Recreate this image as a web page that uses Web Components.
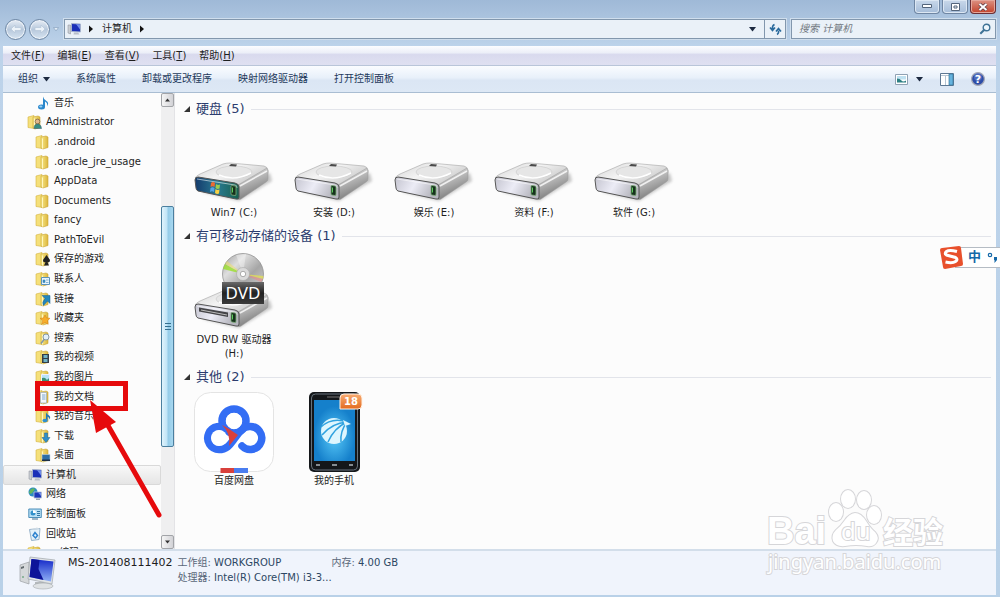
<!DOCTYPE html>
<html lang="zh-CN">
<head>
<meta charset="utf-8">
<title>计算机</title>
<style>
    html, body {
        height: 100%;
        margin: 0;
    }
    body {
        color: #1e1e1e;
        font: 10px/14px "DejaVu Sans", "Noto Sans CJK SC", sans-serif;
        overflow: hidden;
    }
</style>
</head>
<body>
<explorer-window>
    <explorer-titlebar slot="title" location="计算机"></explorer-titlebar>
    <explorer-menu slot="menu">
        <button>文件(<u>F</u>)</button>
        <button>编辑(<u>E</u>)</button>
        <button>查看(<u>V</u>)</button>
        <button>工具(<u>T</u>)</button>
        <button>帮助(<u>H</u>)</button>
    </explorer-menu>
    <explorer-toolbar slot="toolbar">
        <button>组织 <ui-icon name="caret"></ui-icon></button>
        <button>系统属性</button>
        <button>卸载或更改程序</button>
        <button>映射网络驱动器</button>
        <button>打开控制面板</button>
        <button slot="end" aria-label="视图"><ui-icon name="view"></ui-icon><ui-icon name="caret"></ui-icon></button>
        <button slot="end" aria-label="预览窗格"><ui-icon name="pane"></ui-icon></button>
        <button slot="end" aria-label="帮助"><ui-icon name="help"></ui-icon></button>
    </explorer-toolbar>

    <folder-tree slot="tree">
        <tree-item icon="music" nested>音乐</tree-item>
        <tree-item icon="user">Administrator</tree-item>
        <tree-item icon="folder" nested>.android</tree-item>
        <tree-item icon="folder" nested>.oracle_jre_usage</tree-item>
        <tree-item icon="folder" nested>AppData</tree-item>
        <tree-item icon="folder" nested>Documents</tree-item>
        <tree-item icon="folder" nested>fancy</tree-item>
        <tree-item icon="folder" nested>PathToEvil</tree-item>
        <tree-item icon="games" nested>保存的游戏</tree-item>
        <tree-item icon="contacts" nested>联系人</tree-item>
        <tree-item icon="links" nested>链接</tree-item>
        <tree-item icon="favorites" nested>收藏夹</tree-item>
        <tree-item icon="searches" nested>搜索</tree-item>
        <tree-item icon="videos" nested>我的视频</tree-item>
        <tree-item icon="pictures" nested>我的图片</tree-item>
        <tree-item icon="documents" nested>我的文档</tree-item>
        <tree-item icon="mymusic" nested>我的音乐</tree-item>
        <tree-item icon="downloads" nested>下载</tree-item>
        <tree-item icon="desktop" nested>桌面</tree-item>
        <tree-item icon="computer" selected>计算机</tree-item>
        <tree-item icon="network">网络</tree-item>
        <tree-item icon="control">控制面板</tree-item>
        <tree-item icon="recycle">回收站</tree-item>
        <tree-item icon="folder">一 编码</tree-item>
    </folder-tree>

    <item-group heading="硬盘 (5)">
        <item-tile icon="system-drive">Win7 (C:)</item-tile>
        <item-tile icon="drive">安装 (D:)</item-tile>
        <item-tile icon="drive">娱乐 (E:)</item-tile>
        <item-tile icon="drive">资料 (F:)</item-tile>
        <item-tile icon="drive">软件 (G:)</item-tile>
    </item-group>
    <item-group heading="有可移动存储的设备 (1)">
        <item-tile icon="dvd">DVD RW 驱动器 (H:)</item-tile>
    </item-group>
    <item-group heading="其他 (2)">
        <item-tile icon="netdisk">百度网盘</item-tile>
        <item-tile icon="phone">我的手机</item-tile>
    </item-group>

    <details-pane slot="details" name="MS-201408111402">
        <span>工作组: <b>WORKGROUP</b></span>
        <span>内存: <b>4.00 GB</b></span>
        <span>处理器: <b>Intel(R) Core(TM) i3-3...</b></span>
    </details-pane>
</explorer-window>
<click-marker></click-marker>
<ime-bar></ime-bar>
<site-watermark></site-watermark>

<script>
const folder = `
    <path d="M0 2l6-1.500v13l-6-1z" fill="#f5e07a" stroke="#d3b240" stroke-width=".6"/>
    <path d="M5 2l5-1 2 1v10.500l-5 1.500-2-1z" fill="url(#f)" stroke="#c9a434" stroke-width=".6"/>
    <path d="M6.500 3.500v10" stroke="#fff7c0" stroke-width="1"/>
    <defs><linearGradient id="f"><stop stop-color="#f8e88a"/><stop offset="1" stop-color="#dcb63c"/></linearGradient></defs>`;

const screen = `
    <path d="M1 3h2.500v9l-2.500-1z" fill="#c9cdd2" stroke="#888f99" stroke-width=".5"/>
    <path d="M4.500 1.500l9 .5v8l-9-.5z" fill="#1a2fb8" stroke="#a8b4cc" stroke-width=".9"/>
    <path d="M9 2l4 .5v5z" fill="#6f8bea"/>
    <path d="M7 10.500h4l1.500 2h-6z" fill="#b8bec9"/>`;

const driveBody = `
    <defs>
        <linearGradient id="top" x2="1" y2=".6"><stop stop-color="#d2d2d2"/><stop offset=".5" stop-color="#f4f4f4"/><stop offset="1" stop-color="#c9c9c9"/></linearGradient>
        <linearGradient id="side" x2=".4" y2="1"><stop stop-color="#f5f5f5"/><stop offset=".5" stop-color="#b4b4b4"/><stop offset="1" stop-color="#777"/></linearGradient>
        <linearGradient id="face" x2="1" y2=".3"><stop stop-color="#c4c4cf"/><stop offset=".5" stop-color="#ececf6"/><stop offset="1" stop-color="#b5b5bd"/></linearGradient>
        <linearGradient id="sys" x2="1"><stop stop-color="#143a6c"/><stop offset=".5" stop-color="#2a7a92"/><stop offset="1" stop-color="#17604c"/></linearGradient>
        <filter id="soft" x="-20%" y="-30%" width="140%" height="160%"><feGaussianBlur stdDeviation="1.500"/></filter>
    </defs>
    <path d="M8 68l37 9 33-20-2-8-30 10z" fill="#999" opacity=".55" filter="url(#soft)"/>
    <path d="M1 54Q2 52 6 50L29 40Q32 39 36 39L70 42Q74 43 73 46L46 61Z" fill="url(#top)" stroke="#a5a5a5" stroke-width=".6"/>
    <path d="M44 61L73 44Q75 46 74 50V55Q74 57 72 58L47 75Q45 76 44 75Z" fill="url(#side)" stroke="#9a9a9a" stroke-width=".5"/>
    <path d="M46 62L73 47" stroke="#fff" stroke-width="1.500" opacity=".8"/>
    <ellipse cx="40" cy="48" rx="18" ry="6" fill="#e6e6e6" stroke="#cdcdcd" stroke-width=".7"/>
    <path d="M25 51q15 7 32-2" fill="none" stroke="#fff" stroke-width="1.500"/>
    <path d="M37 40l6 .5-1 2-7-.5z" fill="#4a4a4a"/>`;

const driveFace = fill => `
    <path d="M1 56Q1 53 4 53L41 59Q45 60 45 63V73Q45 76 42 75L4 67Q2 66 2 64Z" fill="${fill}" stroke="#555" stroke-width="1"/>
    <path d="M3 55l38 6q2 0 2 3" fill="none" stroke="#fff" stroke-width=".8" opacity=".7"/>
    <path d="M37 62.500q0-1 1-1l3 .5q1 0 1 1v7q0 2-1 1.500l-3-.5q-1 0-1-1z" fill="#16321c" stroke="#7fae7b" stroke-width=".8"/>
    <path d="M38.500 63.500v5" stroke="#5bcb5b" stroke-width="1"/>`;

// name: [width, height, viewBox, markup]
const icons = {
    caret: [7, 5, '0 0 7 5', '<path d="M0 0h7l-3.500 4.500z" fill="#1d2a40"/>'],
    arrow: [5, 8, '0 0 5 8', '<path d="M0 .5l4 3.500-4 3.500z" fill="#111"/>'],
    refresh: [13, 13, '0 0 13 13', '<path d="M5.500 1.500Q3 2.500 3.500 6M1 4.500l2.500 3 2.500-3M8 11.500q2-1 1.500-4M7 8.500l2.500-3 2.500 3" fill="none" stroke="#2a6a9c" stroke-width="1.600"/>'],
    search: [12, 12, '0 0 12 12', '<circle cx="7.500" cy="4.500" r="3.300" fill="#eef7fd" stroke="#3f7396" stroke-width="1.400"/><path d="M5 7L1.300 10.700" stroke="#3f7396" stroke-width="2"/>'],
    view: [13, 11, '0 0 13 11', '<path d="M.5.500h12v10h-12z" fill="#fff" stroke="#8fa1b3"/><path d="M2 2h9v3.500h-9z" fill="#bfe1f1"/><path d="M2 8.500v-4q3 0 4.500 2t4.500 0v2z" fill="#2c7f83"/>'],
    pane: [14, 13, '0 0 14 13', '<path d="M.5.500h13v12h-13z" fill="#fff" stroke="#5d7792"/><path d="M1 2.500h8M5.500 3v9" stroke="#b6c5d3"/><path d="M9 1h4v11h-4z" fill="#66b3de" stroke="#34759c" stroke-width=".7"/>'],
    help: [14, 14, '0 0 14 14', '<circle cx="7" cy="7" r="6.400" fill="#2d4da8" stroke="#a6a9b5" stroke-width="1.200"/><circle cx="7" cy="5" r="4" fill="#7791d4" opacity=".45"/><text x="7" y="11" text-anchor="middle" font-size="11" font-weight="bold" fill="#fff">?</text>'],
    folder: [14, 14, '0 0 14 14', folder],
    music: [14, 14, '0 0 14 14', '<path d="M7 11V.5q.5 3 3.500 4.500 3 2 .5 5.500 1-3.500-2-5v5.500z" fill="#2b88cc"/><ellipse cx="5.500" cy="11" rx="3.500" ry="2.500" fill="#2b88cc"/><ellipse cx="4.800" cy="10.400" rx="1.600" ry="1" fill="#9bd2f5"/>'],
    user: [14, 14, '0 0 14 14', folder + '<circle cx="9.500" cy="6.500" r="2.400" fill="#e1b78b" stroke="#5c4a38" stroke-width=".6"/><path d="M6 13.500q0-4.500 3.500-4.500t4 4.500z" fill="#368e83" stroke="#33566b" stroke-width=".5"/>'],
    games: [14, 14, '0 0 14 14', folder + '<path d="M10.500 3l3.500 5q0 3-2.500 2l1.500 3.500h-5l1.500-3.500q-2.500 1-2.500-2z" fill="#222"/>'],
    contacts: [14, 14, '0 0 14 14', folder + '<path d="M5.500 5.500h8v7h-8z" fill="#e8f3fb" stroke="#5b93ba"/><path d="M7 8h2v2.500h-2zM10 8h2.500M10 10.500h2.500" fill="#3b89bd" stroke="#3b89bd" stroke-width=".6"/>'],
    links: [14, 14, '0 0 14 14', folder + '<path d="M6 3.500h8v8l-2.500-2.500-4 4.500q-2-3 1.500-7z" fill="#2387bd" stroke="#17618f" stroke-width=".5"/>'],
    favorites: [14, 14, '0 0 14 14', folder + '<path d="M9 4l1.500 3 3.500.3-2.600 2.400.8 3.600-3.200-1.900-3.200 1.900.8-3.600-2.600-2.400 3.500-.3z" fill="#f7ad2b" stroke="#d37b13" stroke-width=".5"/>'],
    searches: [14, 14, '0 0 14 14', folder + '<circle cx="10" cy="6" r="3" fill="#e3f0f7" stroke="#8297a5"/><path d="M8 8.500l-3 4" stroke="#8297a5" stroke-width="1.500"/>'],
    videos: [14, 14, '0 0 14 14', folder + '<path d="M6 4h7v9h-7z" fill="#343d47"/><path d="M7.500 5h4v3h-4zM7.500 9h4v3h-4z" fill="#6fb2c5"/>'],
    pictures: [14, 14, '0 0 14 14', folder + '<path d="M5.500 4.500h8v7h-8z" fill="#b7e2f7" stroke="#eef"/><path d="M6 11v-3q3-1 4 1t3-1v3z" fill="#3a8f74"/>'],
    documents: [14, 14, '0 0 14 14', folder + '<path d="M4.500 2.500h6v10.500h-6z" fill="#f5f9fc" stroke="#9aabba" stroke-width=".7"/><path d="M6 5h3.500M6 7h3.500M6 9h3.500" stroke="#5a92c4" stroke-width=".8"/>'],
    mymusic: [14, 14, '0 0 14 14', folder + '<path d="M10 11.500v-8q1 2 3 3t.5 4q0-2-2-3v4z" fill="#2278b8"/><ellipse cx="9" cy="11.500" rx="2.600" ry="1.800" fill="#2e90d0"/>'],
    downloads: [14, 14, '0 0 14 14', folder + '<path d="M8.500 4h3v4.500h2.500l-4 5-4-5h2.500z" fill="#2f8fcb" stroke="#1b6598" stroke-width=".5"/>'],
    desktop: [14, 14, '0 0 14 14', folder + '<path d="M6 6.500h8v6.500h-8z" fill="#2d6ea6" stroke="#c2d3df" stroke-width=".6"/><path d="M6 11.500h8v1.500h-8z" fill="#1c2f45"/>'],
    computer: [14, 14, '0 0 14 14', screen],
    network: [14, 14, '0 0 14 14', '<circle cx="5" cy="5" r="4.500" fill="#2a8cc4"/><path d="M2 3q3-3 5-1l-2 3-2 2-2-1z" fill="#64b65c"/><path d="M6 5h7.500v6h-7.500z" fill="#1c37b9" stroke="#b8c4d5" stroke-width=".8"/><path d="M10 5.500h3v3.500z" fill="#7590e8"/><path d="M8 11.500h4v1.500h-4z" fill="#9aa6b5"/>'],
    control: [14, 14, '0 0 14 14', '<path d="M.8 2h12.500v8.500h-12.500z" fill="#b9e0f5" stroke="#3d84b3" stroke-width=".9"/><circle cx="5" cy="6" r="2.500" fill="#3391cb"/><path d="M5 6v-3a3 3 0 0 1 3 3z" fill="#fff"/><path d="M9 4.500h3M9 6.500h3M9 8.500h3" stroke="#3478a5"/><path d="M4 11h6v2h-6z" fill="#9fb5c6"/>'],
    recycle: [14, 14, '0 0 14 14', '<path d="M1.500 2.500l10.500-1-1 11-7.500 1z" fill="#e3f0f9" stroke="#8aa9c4" stroke-width=".9"/><path d="M2 3l10-1-3-1.500z" fill="#cfdbe4"/><path d="M5 8.500l2-3 2.500 3-2 2.500z" fill="none" stroke="#2d82cf" stroke-width="1.500"/>'],
    'computer-large': [38, 36, '0 0 38 36', `
        <path d="M2 10l9-3v22l-9-3z" fill="#d5d8da" stroke="#909699" stroke-width=".6"/><path d="M3 12l3-1v2l-3 1z" fill="#626a6e"/><circle cx="5" cy="22" r="1" fill="#7a8"/>
        <path d="M17 27h9l2 4h-11z" fill="#b6babd"/><ellipse cx="25" cy="31" rx="10" ry="3" fill="#dfe2e4" stroke="#a4a9ad" stroke-width=".6"/>
        <path d="M12 2l25 3-3 24-24-5z" fill="#e1e4e6" stroke="#a0a6ab" stroke-width=".7"/><path d="M13.500 4l22 2.500-2.500 20-21.500-4.500z" fill="url(#s)"/><path d="M13.500 4l8 1-1 9 5 11-14-3z" fill="#0d1499"/>
        <defs><linearGradient id="s" x2="0" y2="1"><stop stop-color="#1529c8"/><stop offset="1" stop-color="#8fb0f5"/></linearGradient></defs>`],
    drive: [80, 80, '0 0 80 80', driveBody + driveFace('url(#face)')],
    'system-drive': [80, 80, '0 0 80 80', driveBody + driveFace('url(#sys)') + `
        <path d="M17 59q2-2 4 0l-.5 4q-2-1.500-4 0z" fill="#ed6b33"/><path d="M22 60q2 1.500 4 .5l-.5 4q-2 1-4-.5z" fill="#9ccd4d"/>
        <path d="M16.500 64q2-1.500 4 0l-.5 4q-2-1.500-4 0z" fill="#54a4e5"/><path d="M21.500 65q2 1.500 4 .5l-.5 4q-2 1-4-.5z" fill="#f8d144"/>`],
    dvd: [80, 80, '0 0 80 80', `${driveBody}${driveFace('url(#face)')}
        <path d="M5 56.500l29 5v4.500l-29-5.500z" fill="#454548"/><path d="M7 59l26 5" stroke="#bbb" stroke-width="1"/>
        <defs><linearGradient id="disc" x2="1" y2="1"><stop stop-color="#9b9b9b"/><stop offset=".3" stop-color="#dedede"/><stop offset=".6" stop-color="#a6a6a6"/><stop offset="1" stop-color="#d4d4d4"/></linearGradient>
        <linearGradient id="plate" x2="0" y2="1"><stop stop-color="#6a6a6a"/><stop offset=".5" stop-color="#222"/><stop offset="1" stop-color="#3b3b3b"/></linearGradient></defs>
        <circle cx="49" cy="23" r="20.500" fill="url(#disc)" stroke="#888" stroke-width=".7"/>
        <path d="M49 23L29 18l2-5z" fill="#9be02c" opacity=".8"/><path d="M49 23L31 13l2-3z" fill="#f0e060" opacity=".5"/><path d="M49 23l20 5 .5-3z" fill="#e7e34b" opacity=".7"/><path d="M49 23l18 8 2-3z" fill="#e88b88" opacity=".6"/>
        <path d="M49 23l-7-19 10-1z" fill="#fff" opacity=".35"/>
        <circle cx="49" cy="23" r="6.500" fill="#dadada" stroke="#aaa" stroke-width=".6"/><circle cx="49" cy="23" r="2.700" fill="#fff" stroke="#999" stroke-width=".8"/>
        <path d="M28 31h42v22h-42z" fill="url(#plate)"/>
        <text x="49" y="48" text-anchor="middle" font-family="Noto Sans" font-size="17" fill="#fff">DVD</text>`],
    netdisk: [80, 80, '0 0 80 80', `
        <rect x=".5" y=".5" width="79" height="79" rx="16" fill="#fff" stroke="#e4e4e4"/>
        <circle cx="40" cy="29" r="12" fill="none" stroke="#336df4" stroke-width="7.500"/>
        <path d="M33.500 38A11.500 11.500 0 1 0 25 57.500C34 57.500 37 51 41 46S48 34.500 55.500 34.500A11.500 11.500 0 1 1 48 54" fill="none" stroke="#336df4" stroke-width="7.500" stroke-linecap="round"/>
        <path d="M28 33q8 4 13 8l3 2-9 11q2-13-7-21z" fill="#d8403c"/>
        <circle cx="40" cy="29" r="8" fill="#fff"/><circle cx="25" cy="46" r="8" fill="#fff"/>
        <path d="M26.500 76h13.500v5h-13.500z" fill="#d8403c"/><path d="M40 76h14v5h-14z" fill="#4a7df0"/>`],
    phone: [80, 80, '0 0 80 80', `
        <defs><radialGradient id="sea" cy=".6"><stop stop-color="#58c9f8"/><stop offset="1" stop-color="#1580cb"/></radialGradient>
        <linearGradient id="badge" x2="0" y2="1"><stop stop-color="#f8ad73"/><stop offset="1" stop-color="#e36a20"/></linearGradient></defs>
        <rect x="15" y="0" width="51" height="80" rx="5" fill="#14171a"/><rect x="17.500" y="2" width="46" height="76" rx="4" fill="none" stroke="#66717a" stroke-width="1"/>
        <path d="M20 8h41v61h-41z" fill="url(#sea)"/><path d="M33 5h14" stroke="#555" stroke-width="1.500"/>
        <circle cx="40" cy="39" r="13" fill="#def6fe"/>
        <path d="M53 30q-15-5-26 5M53 30q-15 1-25 13M53 30q-13 6-19 20M53 30q-7 9-6 20" fill="none" stroke="#2fa2df" stroke-width="1.500"/>
        <path d="M49 28l8 4-6 2z" fill="#def6fe"/>
        <path d="M22 73h4M38 73h5M55 73h4" stroke="#858c91" stroke-width="2"/>
        <path d="M50 2h14q4 0 4 4v7q0 4-4 4h-18v-11q0-4 4-4z" fill="url(#badge)" stroke="#fff0e3" stroke-width="1"/>
        <text x="57" y="13" text-anchor="middle" font-size="10" font-weight="bold" fill="#fff">18</text>`]
};

class UiIcon extends HTMLElement {
    constructor() {
        super();
        this.attachShadow({mode: 'open'});
    }

    connectedCallback() {
        const [width, height, box, markup] = icons[this.getAttribute('name')];
        this.shadowRoot.innerHTML = `<style>
            :host {
                display: inline-flex;
                flex: none;
            }
            svg {
                overflow: visible;
            }
        </style>
        <svg width="${width}" height="${height}" viewBox="${box}" aria-hidden="true">${markup}</svg>`;
    }
}

class ExplorerWindow extends HTMLElement {
    constructor() {
        super();
        this.attachShadow({mode: 'open'});
        this.shadowRoot.innerHTML = `<style>
            :host {
                background: linear-gradient(#9fb9d7, #bdd3ea 46px, #b9d1e8);
                box-sizing: border-box;
                display: flex;
                flex-direction: column;
                height: 100vh;
                padding: 0 4px 2px 3px;
            }
            .body {
                background: #fcfcfc;
                display: flex;
                flex: 1;
                min-height: 0;
            }
            main {
                flex: 1;
                min-width: 0;
                overflow: hidden;
                padding: 5px 5px 0 9px;
            }
        </style>
        <slot name="title"></slot>
        <slot name="menu"></slot>
        <slot name="toolbar"></slot>
        <div class="body">
            <slot name="tree"></slot>
            <main><slot></slot></main>
        </div>
        <slot name="details"></slot>`;
    }
}

class ExplorerTitlebar extends HTMLElement {
    constructor() {
        super();
        this.attachShadow({mode: 'open'});
    }

    connectedCallback() {
        const place = this.getAttribute('location');
        this.shadowRoot.innerHTML = `<style>
            :host {
                display: block;
                height: 46px;
            }
            button {
                all: unset;
                box-sizing: border-box;
            }
            .controls {
                display: flex;
                gap: 2px;
                height: 14px;
                justify-content: flex-end;
            }
            .controls button {
                align-items: center;
                background: linear-gradient(#c9d8ea, #a5bcd8);
                border: 1px solid #6f86a3;
                border-radius: 0 0 4px 4px;
                border-top: 0;
                box-shadow: inset 0 0 0 1px #dce7f3;
                display: flex;
                justify-content: center;
                width: 26px;
            }
            .controls .close {
                background: linear-gradient(#dd9283, #c2422b);
                border-color: #6b2f35;
                box-shadow: inset 0 0 0 1px #e5a79b;
            }
            .nav {
                align-items: center;
                display: flex;
                gap: 5px;
                height: 20px;
                margin-top: 5px;
            }
            .history {
                align-items: center;
                display: flex;
                gap: 3px;
                padding-left: 2px;
            }
            .history svg {
                flex: none;
            }
            .history button {
                background: linear-gradient(#e7edf5, #b7c8dc 50%, #d7e4f1);
                border: 1px solid #6d86a3;
                border-radius: 50%;
                box-shadow: inset 0 0 0 1px #eef3f9;
                display: grid;
                flex: none;
                height: 21px;
                place-items: center;
                width: 21px;
            }
            .field {
                align-items: center;
                background: #eaf1f8;
                border: 1px solid #8297ad;
                box-shadow: 0 0 0 1px #cfdeed;
                box-sizing: border-box;
                display: flex;
                height: 20px;
            }
            .address {
                flex: 1;
                gap: 8px;
                padding-left: 2px;
            }
            .address .drop {
                margin-left: auto;
            }
            .address .reload {
                align-items: center;
                border-left: 1px solid #8297ad;
                display: flex;
                height: 100%;
                justify-content: center;
                width: 21px;
            }
            .search {
                padding: 0 4px 0 7px;
                width: 205px;
            }
            input {
                background: none;
                border: 0;
                flex: 1;
                font: inherit;
                min-width: 0;
                outline: 0;
                padding: 0;
            }
            input::placeholder {
                color: #737a82;
                font-style: italic;
                opacity: 1;
            }
        </style>
        <div class="controls">
            <button aria-label="最小化"><svg width="10" height="5"><path d="M.5.500h9v3h-9z" fill="#fff" stroke="#53647a"/></svg></button>
            <button aria-label="最大化"><svg width="9" height="8"><path d="M.5.500h8v7h-8zM3 3h3v2h-3z" fill="#fff" stroke="#53647a"/></svg></button>
            <button class="close" aria-label="关闭"><svg width="10" height="8"><path d="M1.500 1l7 6M8.500 1l-7 6" stroke="#5d3d45" stroke-width="3.500"/><path d="M1.500 1l7 6M8.500 1l-7 6" stroke="#fff" stroke-width="2"/></svg></button>
        </div>
        <div class="nav">
            <div class="history">
                <button aria-label="后退"><svg width="12" height="10"><path d="M5 1L1 5l4 4V6.500h6v-3H5z" fill="#edf3f9" stroke="#b4c5d8" stroke-width=".7"/></svg></button>
                <button aria-label="前进"><svg width="12" height="10"><path d="M7 1l4 4-4 4V6.500H1v-3h6z" fill="#edf3f9" stroke="#b4c5d8" stroke-width=".7"/></svg></button>
                <svg width="6" height="5"><path d="M.5.500h5l-2.500 3.500z" fill="#e3edf7" stroke="#8aa3c0" stroke-width=".7"/></svg>
            </div>
            <div class="field address">
                <ui-icon name="computer"></ui-icon>
                <ui-icon name="arrow"></ui-icon>
                <button>${place}</button>
                <ui-icon name="arrow"></ui-icon>
                <button class="drop" aria-label="历史位置"><ui-icon name="caret"></ui-icon></button>
                <button class="reload" aria-label="刷新"><ui-icon name="refresh"></ui-icon></button>
            </div>
            <div class="field search">
                <input type="text" placeholder="搜索 ${place}" aria-label="搜索 ${place}">
                <ui-icon name="search"></ui-icon>
            </div>
        </div>`;
    }
}

class ExplorerMenu extends HTMLElement {
    constructor() {
        super();
        this.attachShadow({mode: 'open'});
        this.shadowRoot.innerHTML = `<style>
            :host {
                align-items: center;
                background: linear-gradient(#fdfdff, #eceff8 35%, #d9daee 45%, #dfe0f1);
                border-bottom: 1px solid #b9c5d9;
                display: flex;
                flex: none;
                gap: 13px;
                height: 19px;
                padding-left: 8px;
            }
            ::slotted(button) {
                background: none;
                border: 0;
                color: inherit;
                font: inherit;
                padding: 0;
            }
        </style>
        <slot></slot>`;
    }
}

class ExplorerToolbar extends HTMLElement {
    constructor() {
        super();
        this.attachShadow({mode: 'open'});
        this.shadowRoot.innerHTML = `<style>
            :host {
                align-items: center;
                background: linear-gradient(#fafcff, #e8f0fa 45%, #dbe6f4 55%, #dde8f5);
                border-bottom: 1px solid #a9bdd2;
                color: #1e395b;
                display: flex;
                flex: none;
                gap: 26px;
                height: 26px;
                padding: 0 11px 0 15px;
            }
            ::slotted(button) {
                align-items: center;
                background: none;
                border: 0;
                color: inherit;
                display: flex;
                font: inherit;
                gap: 5px;
                padding: 0;
            }
            .end {
                display: flex;
                gap: 17px;
                margin-left: auto;
            }
            .end ::slotted(button) {
                gap: 8px;
            }
        </style>
        <slot></slot>
        <div class="end"><slot name="end"></slot></div>`;
    }
}

class FolderTree extends HTMLElement {
    constructor() {
        super();
        this.attachShadow({mode: 'open'});
        this.shadowRoot.innerHTML = `<style>
            :host {
                display: flex;
                flex: none;
                overflow: hidden;
                width: 172px;
            }
            nav {
                display: grid;
                flex: 1;
                grid-auto-rows: 1fr;
                height: calc(100% + 14px);
            }
            .scroll {
                background: #efeff0;
                border-right: 1px solid #e3e3e6;
                display: flex;
                flex: none;
                flex-direction: column;
                width: 13px;
            }
            .end {
                align-items: center;
                background: linear-gradient(90deg, #f5f5f5, #d2d2d6);
                border: 1px solid #a2a4a8;
                border-radius: 2px;
                box-sizing: border-box;
                display: flex;
                height: 14px;
                justify-content: center;
            }
            .before {
                flex: 99;
            }
            .thumb {
                align-items: center;
                background: linear-gradient(90deg, #e0f3fc, #c0e4f6 45%, #94cbe8 55%, #a8d8f0);
                border: 1px solid #4b7f9f;
                border-radius: 2px;
                display: flex;
                flex: 239;
                justify-content: center;
            }
            .after {
                flex: 88;
            }
        </style>
        <nav><slot></slot></nav>
        <div class="scroll">
            <div class="end"><svg width="5" height="4"><path d="M0 3.500l2.500-3 2.500 3z" fill="#333"/></svg></div>
            <div class="before"></div>
            <div class="thumb"><svg width="6" height="7"><path d="M0 .5h6M0 3.500h6M0 6.500h6" stroke="#35708f"/></svg></div>
            <div class="after"></div>
            <div class="end"><svg width="5" height="4"><path d="M0 .5l2.500 3 2.500-3z" fill="#333"/></svg></div>
        </div>`;
    }
}

class TreeItem extends HTMLElement {
    constructor() {
        super();
        this.attachShadow({mode: 'open'});
    }

    connectedCallback() {
        this.shadowRoot.innerHTML = `<style>
            :host {
                display: block;
                min-height: 0;
            }
            a {
                align-items: center;
                border: 1px solid transparent;
                border-radius: 2px;
                box-sizing: border-box;
                color: inherit;
                display: flex;
                gap: 4px;
                height: 100%;
                padding-left: 24px;
                text-decoration: none;
                white-space: nowrap;
            }
            :host([nested]) a {
                padding-left: 32px;
            }
            :host([selected]) a {
                background: linear-gradient(#f8f8f8, #e5e5e5);
                border-color: #d9d9d9;
            }
        </style>
        <a href="#"><ui-icon name="${this.getAttribute('icon')}"></ui-icon><span><slot></slot></span></a>`;
    }
}

class ItemGroup extends HTMLElement {
    constructor() {
        super();
        this.attachShadow({mode: 'open'});
    }

    connectedCallback() {
        this.shadowRoot.innerHTML = `<style>
            :host {
                display: block;
                margin-bottom: 5px;
            }
            h2 {
                align-items: center;
                color: #2c3c6e;
                display: flex;
                font-size: 13px;
                font-weight: normal;
                gap: 6px;
                line-height: 22px;
                margin: 0 0 4px;
            }
            h2::after {
                background: #e2e4ea;
                content: '';
                flex: 1;
                height: 1px;
            }
            .items {
                display: flex;
                flex-wrap: wrap;
            }
        </style>
        <h2><svg width="6" height="6"><path d="M6 0v6h-6z" fill="#333"/></svg>${this.getAttribute('heading')}</h2>
        <div class="items"><slot></slot></div>`;
    }
}

class ItemTile extends HTMLElement {
    constructor() {
        super();
        this.attachShadow({mode: 'open'});
    }

    connectedCallback() {
        this.shadowRoot.innerHTML = `<style>
            :host {
                display: block;
                width: 100px;
            }
            button {
                align-items: center;
                background: none;
                border: 0;
                color: inherit;
                display: flex;
                flex-direction: column;
                font: inherit;
                gap: 2px;
                padding: 0 10px;
                width: 100%;
            }
        </style>
        <button><ui-icon name="${this.getAttribute('icon')}"></ui-icon><span><slot></slot></span></button>`;
    }
}

class DetailsPane extends HTMLElement {
    constructor() {
        super();
        this.attachShadow({mode: 'open'});
    }

    connectedCallback() {
        this.shadowRoot.innerHTML = `<style>
            :host {
                background: #f0f4fc;
                border-top: 2px solid #d3deea;
                box-sizing: border-box;
                display: flex;
                flex: none;
                height: 46px;
                padding: 4px 0 0 15px;
            }
            .name {
                font-size: 11px;
                margin: 1px 5px 0 12px;
            }
            .props {
                color: #5a6779;
                display: grid;
                gap: 1px 0;
                grid-template-columns: 154px auto;
                margin-top: 1px;
                place-content: start;
                white-space: nowrap;
            }
            ::slotted(span) {
                display: block;
            }
        </style>
        <ui-icon name="computer-large"></ui-icon>
        <div class="name">${this.getAttribute('name')}</div>
        <div class="props"><slot></slot></div>`;
        this.querySelectorAll('b').forEach(value => {
            value.style.fontWeight = 'normal';
            value.style.color = '#2c4763';
        });
    }
}

class ClickMarker extends HTMLElement {
    constructor() {
        super();
        this.attachShadow({mode: 'open'});
        this.shadowRoot.innerHTML = `<style>
            :host {
                left: 30px;
                pointer-events: none;
                position: absolute;
                top: 376px;
            }
        </style>
        <svg width="140" height="150" aria-hidden="true">
            <path d="M7.500 7.500h88v25h-88z" fill="none" stroke="#e60a0c" stroke-width="5"/>
            <path d="M76 46L129 139" stroke="#e60a0c" stroke-width="5" stroke-linecap="round"/>
            <path d="M60 24l26 22-20 11z" fill="#e60a0c"/>
        </svg>`;
    }
}

class ImeBar extends HTMLElement {
    constructor() {
        super();
        this.attachShadow({mode: 'open'});
        this.shadowRoot.innerHTML = `<style>
            :host {
                align-items: center;
                display: flex;
                position: absolute;
                right: 0;
                top: 245px;
            }
            div {
                align-items: center;
                background: #fff;
                border: 1px solid #b5bcc4;
                border-right: 0;
                box-sizing: border-box;
                color: #1468a8;
                display: flex;
                font-size: 13px;
                font-weight: bold;
                gap: 6px;
                height: 21px;
                margin-left: -8px;
                padding-left: 12px;
                width: 45px;
            }
            svg {
                flex: none;
            }
            .logo {
                position: relative;
                z-index: 1;
            }
        </style>
        <svg class="logo" width="24" height="24" aria-hidden="true">
            <path d="M3 3L20 1q2 0 2 2l2 16q0 2-2 2L6 24q-2 0-2-2L1 5q0-2 2-2z" fill="#e8502c"/>
            <path d="M18 6.500q-8-2-10.500 0t0 3.500l9 2.500q3 2 0 4t-10 .5" fill="none" stroke="#fff" stroke-width="3"/>
        </svg>
        <div>中<svg width="12" height="12"><circle cx="3" cy="4" r="1.700" fill="none" stroke="#1468a8" stroke-width="1.200"/><path d="M7 6h3v3l-2.500 3v-3h-.5z" fill="#1468a8"/></svg></div>`;
    }
}

class SiteWatermark extends HTMLElement {
    constructor() {
        super();
        this.attachShadow({mode: 'open'});
        this.shadowRoot.innerHTML = `<style>
            :host {
                bottom: 19px;
                pointer-events: none;
                position: absolute;
                right: 50px;
            }
            svg {
                display: block;
                fill: #fff;
                paint-order: stroke;
                stroke: #d6d6d9;
                stroke-width: 2px;
            }
        </style>
        <svg width="186" height="92">
            <text x="3" y="58" font-family="Liberation Sans" font-size="38" font-weight="bold">Bai</text>
            <ellipse cx="72" cy="26" rx="7" ry="9"/>
            <ellipse cx="84" cy="13" rx="7" ry="9"/>
            <ellipse cx="100" cy="14" rx="7" ry="9"/>
            <ellipse cx="110" cy="29" rx="7" ry="9"/>
            <path d="M91 27q6 0 11 8t9 11q5 6 1 11-3 4-9 3-11-2-22 0-9 1-12-5-2-6 3-11 5-4 9-10t10-7z"/>
            <text x="77" y="54" font-family="Noto Sans" font-size="24">du</text>
            <text x="119" y="57" font-family="Noto Sans CJK SC" font-size="30" font-weight="bold">经验</text>
            <text x="4" y="83" font-family="Noto Sans" font-size="20">jingyan.baidu.com</text>
        </svg>`;
    }
}

customElements.define('ui-icon', UiIcon);
customElements.define('explorer-window', ExplorerWindow);
customElements.define('explorer-titlebar', ExplorerTitlebar);
customElements.define('explorer-menu', ExplorerMenu);
customElements.define('explorer-toolbar', ExplorerToolbar);
customElements.define('folder-tree', FolderTree);
customElements.define('tree-item', TreeItem);
customElements.define('item-group', ItemGroup);
customElements.define('item-tile', ItemTile);
customElements.define('details-pane', DetailsPane);
customElements.define('click-marker', ClickMarker);
customElements.define('ime-bar', ImeBar);
customElements.define('site-watermark', SiteWatermark);
</script>
</body>
</html>
